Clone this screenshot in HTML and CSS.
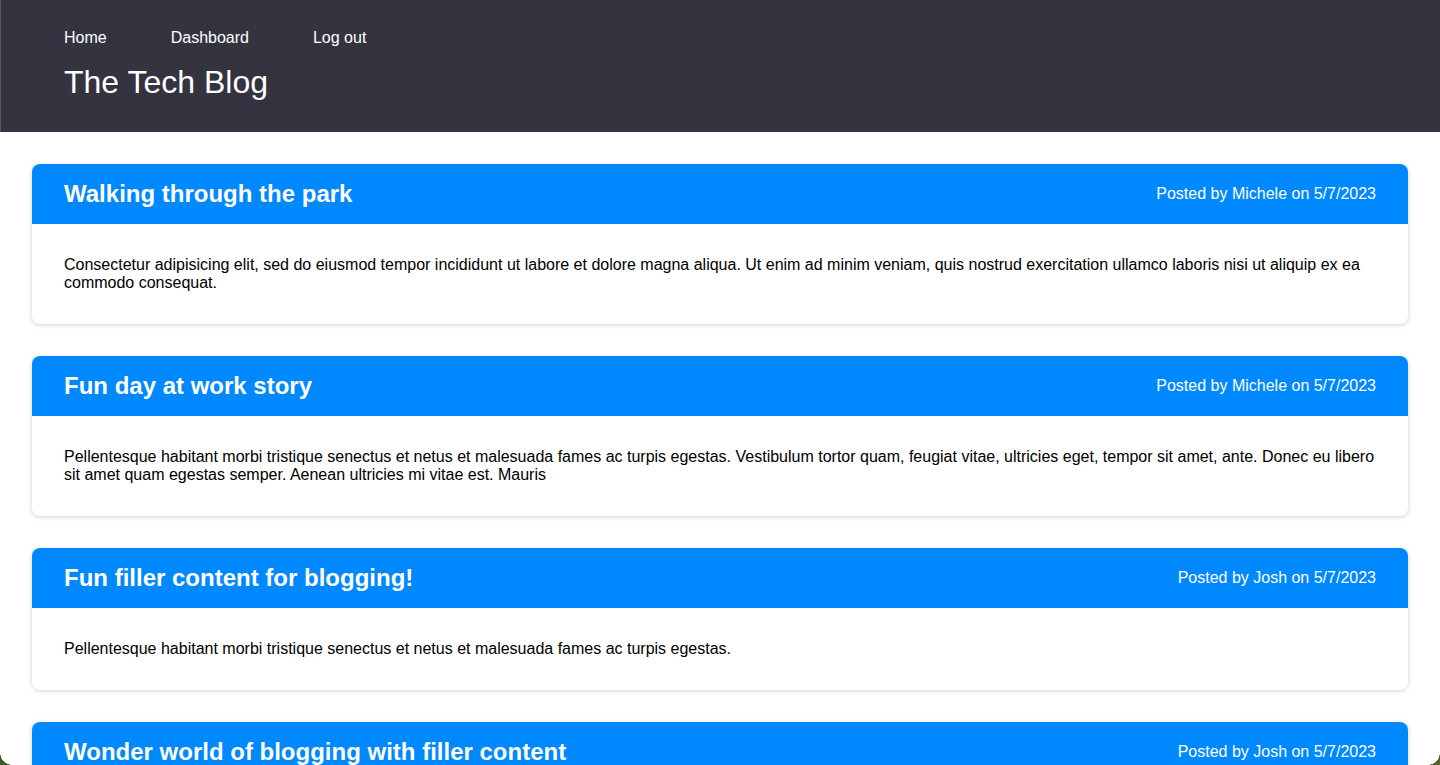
FILE: index.html
```html
<!DOCTYPE html>
<html lang="en">
<head>
<meta charset="utf-8">
<title>The Tech Blog</title>
<link rel="stylesheet" href="styles.css">
</head>
<body>
<header class="site-header">
  <nav class="nav">
    <a class="nav-link" href="#">Home</a>
    <a class="nav-link" href="#">Dashboard</a>
    <a class="nav-link" href="#">Log out</a>
  </nav>
  <h1 class="site-title">The Tech Blog</h1>
</header>
<main class="posts">
  <article class="post">
    <div class="post-head">
      <h2 class="post-title">Walking through the park</h2>
      <span class="post-meta">Posted by Michele on 5/7/2023</span>
    </div>
    <div class="post-body">
      <p>Consectetur adipisicing elit, sed do eiusmod tempor incididunt ut labore et dolore magna aliqua. Ut enim ad minim veniam, quis nostrud exercitation ullamco laboris nisi ut aliquip ex ea commodo consequat.</p>
    </div>
  </article>
  <article class="post">
    <div class="post-head">
      <h2 class="post-title">Fun day at work story</h2>
      <span class="post-meta">Posted by Michele on 5/7/2023</span>
    </div>
    <div class="post-body">
      <p>Pellentesque habitant morbi tristique senectus et netus et malesuada fames ac turpis egestas. Vestibulum tortor quam, feugiat vitae, ultricies eget, tempor sit amet, ante. Donec eu libero sit amet quam egestas semper. Aenean ultricies mi vitae est. Mauris</p>
    </div>
  </article>
  <article class="post">
    <div class="post-head">
      <h2 class="post-title">Fun filler content for blogging!</h2>
      <span class="post-meta">Posted by Josh on 5/7/2023</span>
    </div>
    <div class="post-body">
      <p>Pellentesque habitant morbi tristique senectus et netus et malesuada fames ac turpis egestas.</p>
    </div>
  </article>
  <article class="post">
    <div class="post-head">
      <h2 class="post-title">Wonder world of blogging with filler content</h2>
      <span class="post-meta">Posted by Josh on 5/7/2023</span>
    </div>
    <div class="post-body">
      <p>Pellentesque habitant morbi tristique senectus et netus et malesuada fames ac turpis egestas.</p>
    </div>
  </article>
</main>
<div class="corner corner-left"></div>
<div class="corner corner-right"></div>
</body>
</html>
```

FILE: styles.css
```css
* { box-sizing: border-box; }

html, body {
  margin: 0;
  padding: 0;
  background: #ffffff;
}

body {
  font-family: "Liberation Sans", Arial, Helvetica, sans-serif;
  color: #000;
  font-size: 16px;
}

.site-header {
  background: #33343f;
  color: #fff;
  padding: 29px 64px 31px 63px;
  border-left: 1px solid #55565f;
}

.nav {
  display: flex;
  gap: 64px;
}

.nav-link {
  color: #fff;
  text-decoration: none;
  font-size: 16px;
  line-height: 18px;
}

.site-title {
  margin: 17px 0 0;
  font-size: 32px;
  font-weight: 400;
  line-height: 37px;
}

.posts {
  display: flex;
  flex-direction: column;
  gap: 32px;
  padding: 32px;
}

.post {
  background: #fff;
  border-radius: 8px;
  box-shadow: 0 1px 5px rgba(0, 0, 0, 0.18);
  overflow: hidden;
}

.post-head {
  background: #0088ff;
  color: #fff;
  height: 60px;
  padding: 0 32px;
  display: flex;
  align-items: center;
  justify-content: space-between;
}

.post-title {
  margin: 0;
  font-size: 24px;
  font-weight: 700;
}

.post-meta {
  font-size: 16px;
}

.post-body {
  padding: 32px;
}

.post-body p {
  margin: 0;
  line-height: 18px;
}

.corner {
  position: fixed;
  bottom: 0;
  width: 12px;
  height: 12px;
  pointer-events: none;
}

.corner-left {
  left: 0;
  background: radial-gradient(circle at 12px 0, transparent 11.5px, #3d5a2a 12px);
}

.corner-right {
  right: 0;
  background: radial-gradient(circle at 0 0, transparent 11.5px, #55632f 12px);
}
```
